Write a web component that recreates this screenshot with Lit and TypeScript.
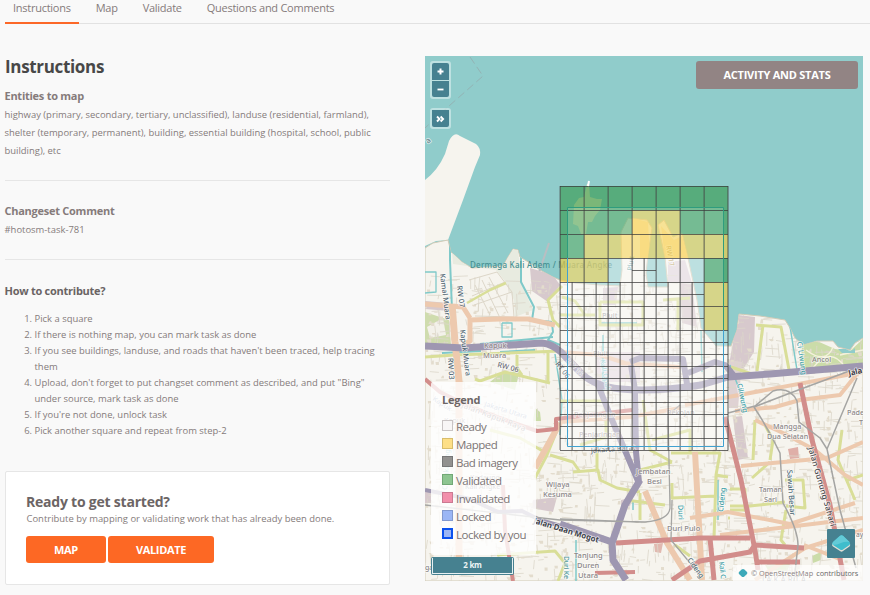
import { LitElement, html, svg, css } from "lit";
import { customElement } from "lit/decorators.js";

type Road = [color: string, width: number, d: string];
type Label = [text: string, x: number, y: number, size?: number, color?: string, rotate?: number, bold?: boolean, length?: number];

const WATER = "#90cccb";
const LAND = "#f6f4ee";
const PURPLE = "#9e97b1";
const RED = "#d28d8b";
const PEACH = "#edc9ae";
const YELLOW = "#d9de98";
const TEAL = "#7fc9c9";
const RAIL = "#a5a5a3";

const mainland =
  "M425 248L433 243L448 240L451 252L462 262L472 268L503 266L508 257L513 249L518 250L520 257L530 263L540 270L553 277L560 280L575 283L600 285L620 286L622 270L621 232L628 218L647 220L652 228L648 255L646 273L648 287L668 287L665 257L658 225L664 220L673 237L682 233L688 258L697 300L701 328L716 346L731 346L737 330L739 314L760 316L785 320L790 328L795 338L803 345L817 341L833 341L838 347L850 350L855 343L863 338V581H425Z";
const peninsula = "M449 141Q454 131 460 136L476 144Q481 148 480 155L475 167L463 200L448 240L436 241L425 246V180Q438 170 445 154Z";
const island = "M574 205L579 198L584 197L587 184L589 184L590 197L597 199L602 199L600 210L595 216L592 222L588 222L586 234L581 234L578 226L573 224Z";

const areas: [string, string][] = [
  ["#e8ebe0", "M452 252L462 262L472 268L503 266L508 257L513 249L518 250L522 285L533 310L515 317L514 300L504 280L496 270L453 264Z"],
  ["#cfdcae", "M425 312L449 320L451 345H425Z"],
  ["#f3f1ea", "M427 327L443 318L446 335L430 338Z"],
  ["#d7c9cd", "M530 268L553 275L560 285L548 302L532 291Z"],
  ["#d7c9cd", "M425 301L449 303V311L425 309Z"],
  ["#d7c9cd", "M738 315L755 317L754 352L737 379L728 370Z"],
  ["#dfd2d3", "M729 360L742 362L738 408H729Z"],
  ["#d7c9cd", "M680 283L692 284L697 327L682 323Z"],
  ["#e0d5dc", "M668 262L685 260L692 283H668Z"],
  ["#d9cdd6", "M603 288L618 287L616 305H603Z"],
  ["#e6dbe0", "M596 352H640V382H596Z"],
  ["#d7c9cd", "M733 417L742 416L748 458L738 460Z"],
  ["#cbdca9", "M802 345L817 341L835 349L850 351L863 339V366L800 375Z"],
  ["#fbe3b4", "M632 218L648 222L650 258H640V234L632 236Z"],
  ["#fbe3b4", "M661 226L674 240L682 236L688 258H665Z"],
  ["#cbdca9", "M500 374L520 370L515 390L490 382Z"],
  ["#cbdca9", "M535 408L540 412L541 421L533 421Z"],
  ["#d7c9cd", "M533 500L557 497L553 512L531 508Z"],
  ["#d7c9cd", "M425 491H431V503H425Z"],
  ["#e1b9b0", "M654 544L663 543L661 553L655 552Z"],
  ["#dfafa8", "M788 449L798 447L799 458L790 459Z"],
  ["#cbdca9", "M812 556L821 552L821 560L813 563Z"],
  ["#cbdca9", "M765 565L790 564L787 571L768 570Z"],
  ["#d7c9cd", "M621 500L633 497L630 506L621 507Z"],
];

const roads: Road[] = [
  [TEAL, 2, "M450 241L450 260L452 310"],
  [TEAL, 2, "M521 252L521 282L534 307L532 320L552 322M552 323L553 332L548 340L560 345"],
  [TEAL, 2, "M480 344L553 337M500 352L535 350M481 351L442 353"],
  [TEAL, 1.3, "M425 293L436 292V272H425M502 323V337H512V323H502"],
  [TEAL, 1.5, "M555 354L562 400L560 435M789 320L797 370M701 330L702 372M600 323H637M603 335V400M633 500V510M576 540V581M730 365L748 412M718 480V520"],
  [YELLOW, 3, "M425 357L455 355L560 351M475 379L480 381L505 372L550 383M517 355V368L522 375M548 352V383"],
  [YELLOW, 2.5, "M467 303L490 290L506 283"],
  [YELLOW, 3, "M562 286L548 300L553 320L560 327M562 297L575 301L585 315M600 302H643V325H600V302M595 315H560M663 300L690 298M678 300V330"],
  [YELLOW, 3, "M756 325L781 327L790 375M763 325L757 371M731 367L758 376L796 371"],
  [YELLOW, 3, "M560 423L547 455L535 478M548 454L520 438L490 430M550 455L573 462L580 472M573 472L598 470L600 480L617 488L640 492M597 451V470M640 470L672 462M560 401H606V437L580 445M671 453H720L716 475L728 477M672 483V498L716 496M716 475L714 540M625 500L665 505M640 493V520M643 400L650 450L672 462M652 440L690 430V452"],
  [YELLOW, 3, "M755 420L753 460M765 425L773 440L770 460M730 489H745V510H730M730 506L750 506L785 502M785 480H803L805 508L786 506M785 545L781 540L786 510M728 518L730 518M842 430L838 460L855 500M848 480L863 475M497 555L555 551L565 563L558 581M675 545L690 556M752 478L770 462"],
  [PEACH, 5, "M425 304L463 307L470 318M470 318V341L463 345M470 320L500 319L528 319L555 325"],
  [PEACH, 7, "M452 304L455 342L459 381L459 565"],
  [PEACH, 4, "M620 363L680 367M560 352L600 355L625 363M685 405L863 372M680 408L630 417L560 422"],
  [PEACH, 6, "M560 423L535 468M645 491L667 543L690 580M695 452L702 580"],
  [PEACH, 4, "M735 411L775 407L800 400L840 395L860 370M741 466L827 458L863 442M690 518L728 512L790 524L855 503M720 535L863 518M755 420L783 433L815 450L845 475L863 485M804 545L842 560M755 580L805 548L863 530"],
  [RED, 4, "M425 379L440 392L464 404L500 418L537 431L556 429V419L632 410M503 485L505 530L513 581M595 573L635 572"],
  [RED, 5, "M800 383L812 440L830 505L844 580M725 417L741 480L755 550L758 570"],
  [RED, 5, "M616 543L700 538L750 538M710 538L714 580M672 580L700 561L750 552L755 545L804 548M757 562L800 562"],
  [PURPLE, 7, "M425 346L464 348L542 343Q552 344 561 352L579 371Q592 386 621 389Q655 392 701 385L728 377L770 374L863 366"],
  [PURPLE, 6, "M598 385L612 420L638 481M631 365L635 390L636 452L639 482M630 362L640 358L683 359L687 384M688 373L715 362L725 365L735 377"],
  [PURPLE, 7, "M640 480L625 505L612 543M560 524L612 542L613 560L626 580"],
  [PURPLE, 4, "M425 490L470 499L498 512L522 511L540 520L575 530"],
  [RAIL, 1.5, "M728 413L755 406L773 391Q790 386 797 401L799 422L820 438L827 449L840 510L856 568M754 407Q769 430 780 453L783 503Q798 530 798 545L794 581M754 407L793 392L852 370M857 378L827 449"],
  [RAIL, 1.3, "M425 505L560 520L645 522Q670 520 670 507L668 415L680 405M672 500L671 540L700 575M637 522L560 519"],
];

const labels: Label[] = [
  ["Dermaga Kali Adem / Muara Angke", 470, 268, 8, "#458f91", 0, false, 142],
  ["Kamal Muara", 440, 274, 7.3, "#506572", 83],
  ["RW 07", 457, 286, 7.3, "#506572", 83],
  ["Kapuk Muara", 460, 330, 7.3, "#506572", 83],
  ["RW 03", 448, 358, 7.3, "#506572", 87],
  ["RW 06", 497, 367, 7.3, "#6e6e76", 14],
  ["Kapuk", 484, 348, 7.5, "#90878a"],
  ["Muara", 483, 358, 7.5, "#90878a"],
  ["RT 06", 555, 364, 7.3, "#626b74", 52],
  ["Pluit", 602, 318, 7.2, "#aaa6a6"],
  ["Pluit", 593, 356, 7.2, "#b4aaa6"],
  ["RW 16", 566, 361, 7.2, "#aaa6b2", 48],
  ["RW 17", 666, 246, 7, "#b8a064", 80],
  ["Pluit", 632, 271, 7, "#75a7a9", -82],
  ["Kali Opak", 600, 360, 7, "#8ccbd0", 79],
  ["Penjaringan", 574, 417, 7.2, "#b6aaa9"],
  ["Penjaringan", 579, 437, 7.2, "#b6aaa9"],
  ["Pekojan", 667, 415, 7.2, "#aea9a9"],
  ["Jakarta Barat", 591, 453, 7.2, "#717a80", -4],
  ["Ancol", 812, 362, 7.2],
  ["Ci Liwung", 797, 342, 7.2, "#429fa7", 82],
  ["Ciliwung", 737, 384, 7.2, "#429fa7", 78],
  ["Mangga", 773, 429, 7.2],
  ["Dua Selatan", 767, 439, 7.2],
  ["Pade", 847, 415, 7.2],
  ["T", 859, 425, 7.2],
  ["Taman", 759, 492, 7.2],
  ["Sari", 764, 502, 7.2],
  ["Sawah Besar", 787, 470, 7.5, "#506c78", 86],
  ["Jalan Gunung Sahari", 808, 448, 8, "#46474a", 74, false, 82],
  ["Jala", 849, 376, 8, "#414149", -13, true, 14],
  ["Jembatan", 636, 474, 7.5],
  ["Besi", 647, 484, 7.5],
  ["Wijaya", 546, 487, 7.5],
  ["Kesuma", 543, 497, 7.5],
  ["Duri Pulo", 667, 531, 7.5],
  ["Tanjung", 574, 558, 7.5],
  ["Duren", 577, 568, 7.5],
  ["Utara", 578, 578, 7.5],
  ["Duri Ke", 564, 556, 7, "#4e9898", 90, false, 23],
  ["Duri", 678, 505, 7.3, "#429fa7", 88],
  ["Cideng", 723, 512, 7.3, "#429fa7", -84],
  ["Cideng", 687, 560, 7.3, "#536e77", 54, false, 23],
  ["Kali C", 719, 562, 7, "#429fa7", 83, false, 17],
  ["Jalan Daan Mogot", 533, 523, 8, "#42444c", 17, true, 68],
  ["JAKARTA", 762, 583, 8, "#999", 0, false, 44],
  ["Jakarta Utara", 484, 406, 7, "#91a1b7", 17],
  ["Jalan Kapuk Raya", 461, 407, 8, "#807878", 21, false, 68],
  ["Kapuk", 432, 400, 7, "#91a1b7", 33],
  ["Kapuk", 444, 423, 7],
  ["Kedaung", 470, 480, 7],
  ["Kali Angke", 465, 489, 7],
  ["Cengkareng", 447, 490, 7, "#79babb", -86],
  ["ga", 425, 570, 7],
  ["ay", 856, 537, 6.5],
  ["a", 428, 144, 8, "#68848a", -40],
];

/** Small repeatable generator, so the street texture is stable between renders. */
function streetTexture(): { streets: string; blocks: string } {
  let seed = 781;
  const next = () => ((seed = (seed * 16807) % 2147483647) / 2147483647);
  let streets = "";
  let blocks = "";
  for (let i = 0; i < 1500; i++) {
    const x = 425 + next() * 438;
    const y = 275 + next() * 306;
    const long = 4 + next() * 13;
    const tilt = (next() - 0.5) * 3;
    streets += next() > 0.5 ? `M${x.toFixed(1)} ${y.toFixed(1)}l${long.toFixed(1)} ${tilt.toFixed(1)}` : `M${x.toFixed(1)} ${y.toFixed(1)}l${tilt.toFixed(1)} ${long.toFixed(1)}`;
  }
  for (let i = 0; i < 700; i++) {
    const x = 425 + next() * 438;
    const y = 285 + next() * 296;
    blocks += `M${x.toFixed(1)} ${y.toFixed(1)}h${(1 + next() * 4).toFixed(1)}v${(1 + next() * 3).toFixed(1)}h-3z`;
  }
  return { streets, blocks };
}
const texture = streetTexture();

const VALID = "rgba(52,152,76,.62)";
const MAPPED = "rgba(246,203,52,.6)";
const READY = "rgba(255,255,255,.27)";
// One letter per 24px task square: v validated, m mapped, r ready, s ready and split in four.
const tasks = ["vvvvvvv", "vvvmmvv", "vmmmmmm", "mmrsrrv", "ssssssm", "ssssssm", "sssssss", "sssssss", "sssssss", "sssssss", "sssssss"];

const legend: [string, string, string][] = [
  ["Ready", "#f8f6f6", "#c9c4c4"],
  ["Mapped", "#fddf87", "#d8bd6c"],
  ["Bad imagery", "#92918f", "#777"],
  ["Validated", "#8dc591", "#72a876"],
  ["Invalidated", "#f28fab", "#cb7991"],
  ["Locked", "#9bb6f5", "#8299cf"],
  ["Locked by you", "#9bb6f5", "#0b51ee"],
];

@customElement("task-map")
class TaskMap extends LitElement {
  static styles = css`
    :host { display: block; position: relative; width: 438px; height: 525px; overflow: hidden; font-family: "Open Sans", sans-serif; }
    .canvas { display: block; width: 438px; height: 525px; }
    .label { font-family: "Noto Sans", sans-serif; paint-order: stroke; stroke: rgba(255,255,255,.65); stroke-width: 1.6px; stroke-linejoin: round; }
    .label.plain { stroke: none; }
    .controls { position: absolute; left: 5px; top: 5px; display: flex; flex-direction: column; gap: 9px; }
    .group { display: flex; flex-direction: column; gap: 1px; padding: 2px; border-radius: 3px; background: rgba(255,255,255,.42); }
    .control { display: flex; align-items: center; justify-content: center; width: 17px; height: 17px; background: #468190; }
    .control.out { height: 16px; }
    .group .control:first-child { border-radius: 2px 2px 0 0; }
    .group .control:last-child { border-radius: 0 0 2px 2px; }
    .control svg { display: block; fill: none; stroke: #fff; }
    .stats { position: absolute; right: 5px; top: 5px; width: 162px; height: 28px; border-radius: 3px; background: #928484; color: #fff; text-align: center; font: 700 11px/28px "Open Sans", sans-serif; letter-spacing: -.25px; }
    .legend { position: absolute; box-sizing: border-box; left: 6px; top: 326px; width: 105px; height: 173px; padding: 10px 0 0 11px; border-radius: 2px; background: rgba(255,255,255,.8); color: #7b7474; }
    .legend-title { margin: 0 0 10px; font: 700 11px/16px "Open Sans", sans-serif; letter-spacing: -.25px; color: #6c6666; }
    .row { display: flex; align-items: center; gap: 3px; height: 18px; font-size: 11.5px; line-height: 18px; letter-spacing: -.5px; white-space: nowrap; }
    .swatch { box-sizing: border-box; width: 11px; height: 11px; margin-top: -3px; border: 1px solid; }
    .swatch.own { border-width: 2px; }
    .scale { position: absolute; box-sizing: border-box; left: 6px; top: 501px; width: 83px; height: 18px; padding: 1px; border-radius: 2px; background: #468190; }
    .bar { box-sizing: border-box; height: 16px; border: 1px solid #e7f0f1; border-top: 0; color: #eef5f5; text-align: center; font: 700 8px/14px "Open Sans", sans-serif; letter-spacing: -.3px; }
    .overview { position: absolute; left: 402px; top: 473px; width: 28px; height: 29px; border-radius: 1px; background: #468190; }
    .credit { position: absolute; right: 0; bottom: 0; display: flex; align-items: center; gap: 3px; box-sizing: border-box; height: 16px; width: 130px; padding-left: 5px; background: rgba(255,255,255,.72); color: #666; font-size: 7.3px; white-space: nowrap; }
    .osm { color: #8b8385; }
  `;

  private taskGrid() {
    return tasks.map((row, r) =>
      [...row].map((kind, c) => {
        const x = 560 + c * 24;
        const y = 186 + r * 24;
        const fill = kind === "v" ? VALID : kind === "m" ? MAPPED : READY;
        return svg`<rect x=${x} y=${y} width="24" height="24" fill=${fill}></rect>`;
      }),
    );
  }

  private taskLines() {
    let across = "";
    let down = "";
    tasks.forEach((row, r) =>
      [...row].forEach((kind, c) => {
        const x = 560 + c * 24;
        const y = 186 + r * 24;
        across += `M${x} ${y + 0.5}h24`;
        down += `M${x + 0.2} ${y}v24`;
        if (kind === "s") {
          across += `M${x} ${y + 12.5}h24`;
          down += `M${x + 12.2} ${y}v24`;
        }
      }),
    );
    across += "M560 450.5h168";
    down += "M728 186v264.5";
    return svg`
      <path d=${down} stroke="#444" stroke-opacity=".54" stroke-width="1.6" fill="none"></path>
      <path d=${across} stroke="#3c3c3c" stroke-opacity=".74" stroke-width="1" fill="none"></path>`;
  }

  render() {
    return html`
      <svg class="canvas" viewBox="425 56 438 525">
        <defs><clipPath id="land"><path d=${mainland}></path></clipPath></defs>
        <rect x="425" y="56" width="438" height="525" fill=${WATER}></rect>
        <path d="M470 57L483 76L449 106L425 128" fill="none" stroke="#93b3b4" stroke-dasharray="8 4"></path>
        <path d=${peninsula} fill=${LAND}></path>
        <path d=${island} fill="#efeabf"></path>
        <path d=${mainland} fill=${LAND} stroke="#d1cbb7" stroke-width="1"></path>
        <path d="M537 278L549 243" stroke="#b9bec2" stroke-width="2"></path>
        <g clip-path="url(#land)">
          ${areas.map(([fill, d]) => svg`<path d=${d} fill=${fill}></path>`)}
          <path d=${texture.streets} stroke="#dcd7ca" stroke-width=".8" fill="none"></path>
          <path d=${texture.blocks} fill="#e3dccd"></path>
          <path d="M469 280L497 272L512 292L514 317L475 316M475 285L490 315M482 280L500 318M489 277L508 313M472 296L505 282M474 305L512 292" fill="none" stroke="#dcd6c8" stroke-width="1"></path>
          <path d="M806 350Q826 365 833 347M812 369Q830 345 845 367M840 355L863 350" fill="none" stroke="#f4f1dc" stroke-width="1.4"></path>
          <path d="M838 349h8q5 4 9-1v5h-13z" fill=${WATER}></path>
          ${roads.map(([color, width, d]) => svg`<path d=${d} fill="none" stroke=${color} stroke-width=${width} stroke-linejoin="round"></path>`)}
        </g>
        ${labels.map(
          ([text, x, y, size = 7.2, color = "#8b8788", rotate = 0, bold = false, length], i) => svg`
            <text class="label ${i === 0 ? "plain" : ""}" x=${x} y=${y} font-size=${size} fill=${color} font-weight=${bold ? 700 : 500}
              textLength=${length ?? ""} transform=${`rotate(${rotate} ${x} ${y})`}>${text}</text>`,
        )}
        ${this.taskGrid()}
        <rect x="567.5" y="207.5" width="156" height="239" fill="#fff" fill-opacity=".18"></rect>
        ${this.taskLines()}
        <path d="M588 186L589 181" stroke="#fff" stroke-width="2"></path>
        <path d="M567.5 258V207.5H723.5V330" fill="none" stroke="#2f9c7e"></path>
        <path d="M567.5 258V446.5H723.5V330" fill="none" stroke="#40a1d0"></path>
      </svg>
      <div class="controls">
        <div class="group">
          <span class="control"><svg width="9" height="9" stroke-width="2"><path d="M1.5 4.5h6M4.5 1.5v6"></path></svg></span>
          <span class="control out"><svg width="9" height="9" stroke-width="1.8"><path d="M1.5 4.5h6"></path></svg></span>
        </div>
        <div class="group">
          <span class="control"><svg width="9" height="9" stroke-width="1.9"><path d="M1 2.5l2.5 2.5L1 7.5M4.6 2.5l2.5 2.5L4.6 7.5"></path></svg></span>
        </div>
      </div>
      <div class="stats">ACTIVITY AND STATS</div>
      <div class="legend">
        <h4 class="legend-title">Legend</h4>
        ${legend.map(
          ([name, fill, edge], i) => html`<div class="row">
            <span class="swatch ${i === legend.length - 1 ? "own" : ""}" style="background:${fill};border-color:${edge}"></span><span>${name}</span>
          </div>`,
        )}
      </div>
      <div class="scale"><div class="bar">2 km</div></div>
      <div class="overview">
        <svg width="28" height="29">
          <path d="M6 14L13 8.5Q14.5 7.5 16 8.5L22.5 14Q24 16 22.5 17.5L16 22Q14.5 23.3 13 22L6 17.5Q4.2 16 6 14Z" fill="#e1dfd6"></path>
          <path d="M6 13L13 6.7Q14.5 5.8 16 6.7L22.5 13Q23.8 14.5 22.5 16L16 20.5Q14.5 21.7 13 20.5L6 16Q4.5 14.5 6 13Z" fill="#3fbdcc"></path>
          <path d="M6 13L13 6.7Q14.5 5.8 16 6.7L22.5 13Q18 12 14 14T6 16Q4.5 14.5 6 13Z" fill="#63cbd7"></path>
        </svg>
      </div>
      <div class="credit">
        <svg width="10" height="10"><path d="M3.6 1.6Q5 .6 6.4 1.6L9 4Q9.8 5 9 6L6.4 8.4Q5 9.4 3.6 8.4L1 6Q.2 5 1 4Z" fill="#3da9b9"></path></svg>
        <span class="osm">© OpenStreetMap</span><span>contributors</span>
      </div>`;
  }
}

@customElement("app-root")
class AppRoot extends LitElement {
  static styles = css`
    :host { display: block; width: 870px; height: 595px; overflow: hidden; background: #f9f9f9; color: #857b7b; font-family: "Open Sans", sans-serif; }
    .tabs { display: flex; box-sizing: border-box; height: 24px; margin-left: 5px; border-bottom: 1px solid #e2e2e2; }
    .tab { box-sizing: border-box; height: 24px; padding: 0 8px; margin-right: 9px; font-size: 11px; line-height: 16px; letter-spacing: -.26px; white-space: nowrap; }
    .tab.active { border-bottom: 2px solid #fc6828; width: 74px; margin-right: 8.7px; }
    .body { display: flex; gap: 35px; padding: 32px 0 0 5px; }
    .guide { width: 385px; height: 529px; }
    h1, h2, h3, p, ol { margin: 0; }
    h1 { height: 22px; font-size: 17px; line-height: 22px; letter-spacing: -.33px; color: #484848; white-space: nowrap; }
    h3 { height: 18px; margin-left: -.5px; font-size: 11px; line-height: 18px; letter-spacing: -.26px; white-space: nowrap; }
    p { margin: 1px 0 0 -.5px; font-size: 9.45px; line-height: 18px; white-space: nowrap; }
    .entities { margin-top: 9px; }
    .section { margin-top: 20px; padding-top: 21px; border-top: 1px solid #e6e6e6; }
    .section.how { padding-top: 22px; }
    .section.how h3 { color: #6a6464; }
    ol { margin-top: 11px; padding-left: 29.5px; font-size: 9.45px; line-height: 16px; white-space: nowrap; }
    .card { box-sizing: border-box; height: 114px; margin-top: 32px; padding: 20px 20px; border: 1px solid #e6e6e6; border-radius: 2px; background: #fff; }
    h2 { font-size: 14px; line-height: 20px; letter-spacing: -.22px; color: #6c6565; white-space: nowrap; }
    .card p { line-height: 14px; margin: 0 0 0 .5px; }
    .actions { display: flex; gap: 2px; margin-top: 10px; }
    .action { display: block; box-sizing: border-box; height: 27px; padding: 0; border: 0; border-radius: 3px; background: #fd6824; color: #fff; text-align: center; font: 700 11px/27px "Open Sans", sans-serif; letter-spacing: -.35px; }
    .map { width: 80px; }
    .validate { width: 106px; }
  `;

  render() {
    const names = ["Instructions", "Map", "Validate", "Questions and Comments"];
    return html`
      <nav class="tabs">${names.map((name, i) => html`<a class="tab ${i === 0 ? "active" : ""}">${name}</a>`)}</nav>
      <main class="body">
        <section class="guide">
          <h1>Instructions</h1>
          <div class="entities">
            <h3>Entities to map</h3>
            <p>highway (primary, secondary, tertiary, unclassified), landuse (residential, farmland),<br />shelter (temporary, permanent), building, essential building (hospital, school, public<br />building), etc</p>
          </div>
          <div class="section"><h3>Changeset Comment</h3><p>#hotosm-task-781</p></div>
          <div class="section how">
            <h3>How to contribute?</h3>
            <ol>
              <li>Pick a square</li>
              <li>If there is nothing map, you can mark task as done</li>
              <li>If you see buildings, landuse, and roads that haven't been traced, help tracing<br />them</li>
              <li>Upload, don't forget to put changset comment as described, and put "Bing"<br />under source, mark task as done</li>
              <li>If you're not done, unlock task</li>
              <li>Pick another square and repeat from step-2</li>
            </ol>
          </div>
          <div class="card">
            <h2>Ready to get started?</h2>
            <p>Contribute by mapping or validating work that has already been done.</p>
            <div class="actions"><button class="action map">MAP</button><button class="action validate">VALIDATE</button></div>
          </div>
        </section>
        <task-map></task-map>
      </main>`;
  }
}
